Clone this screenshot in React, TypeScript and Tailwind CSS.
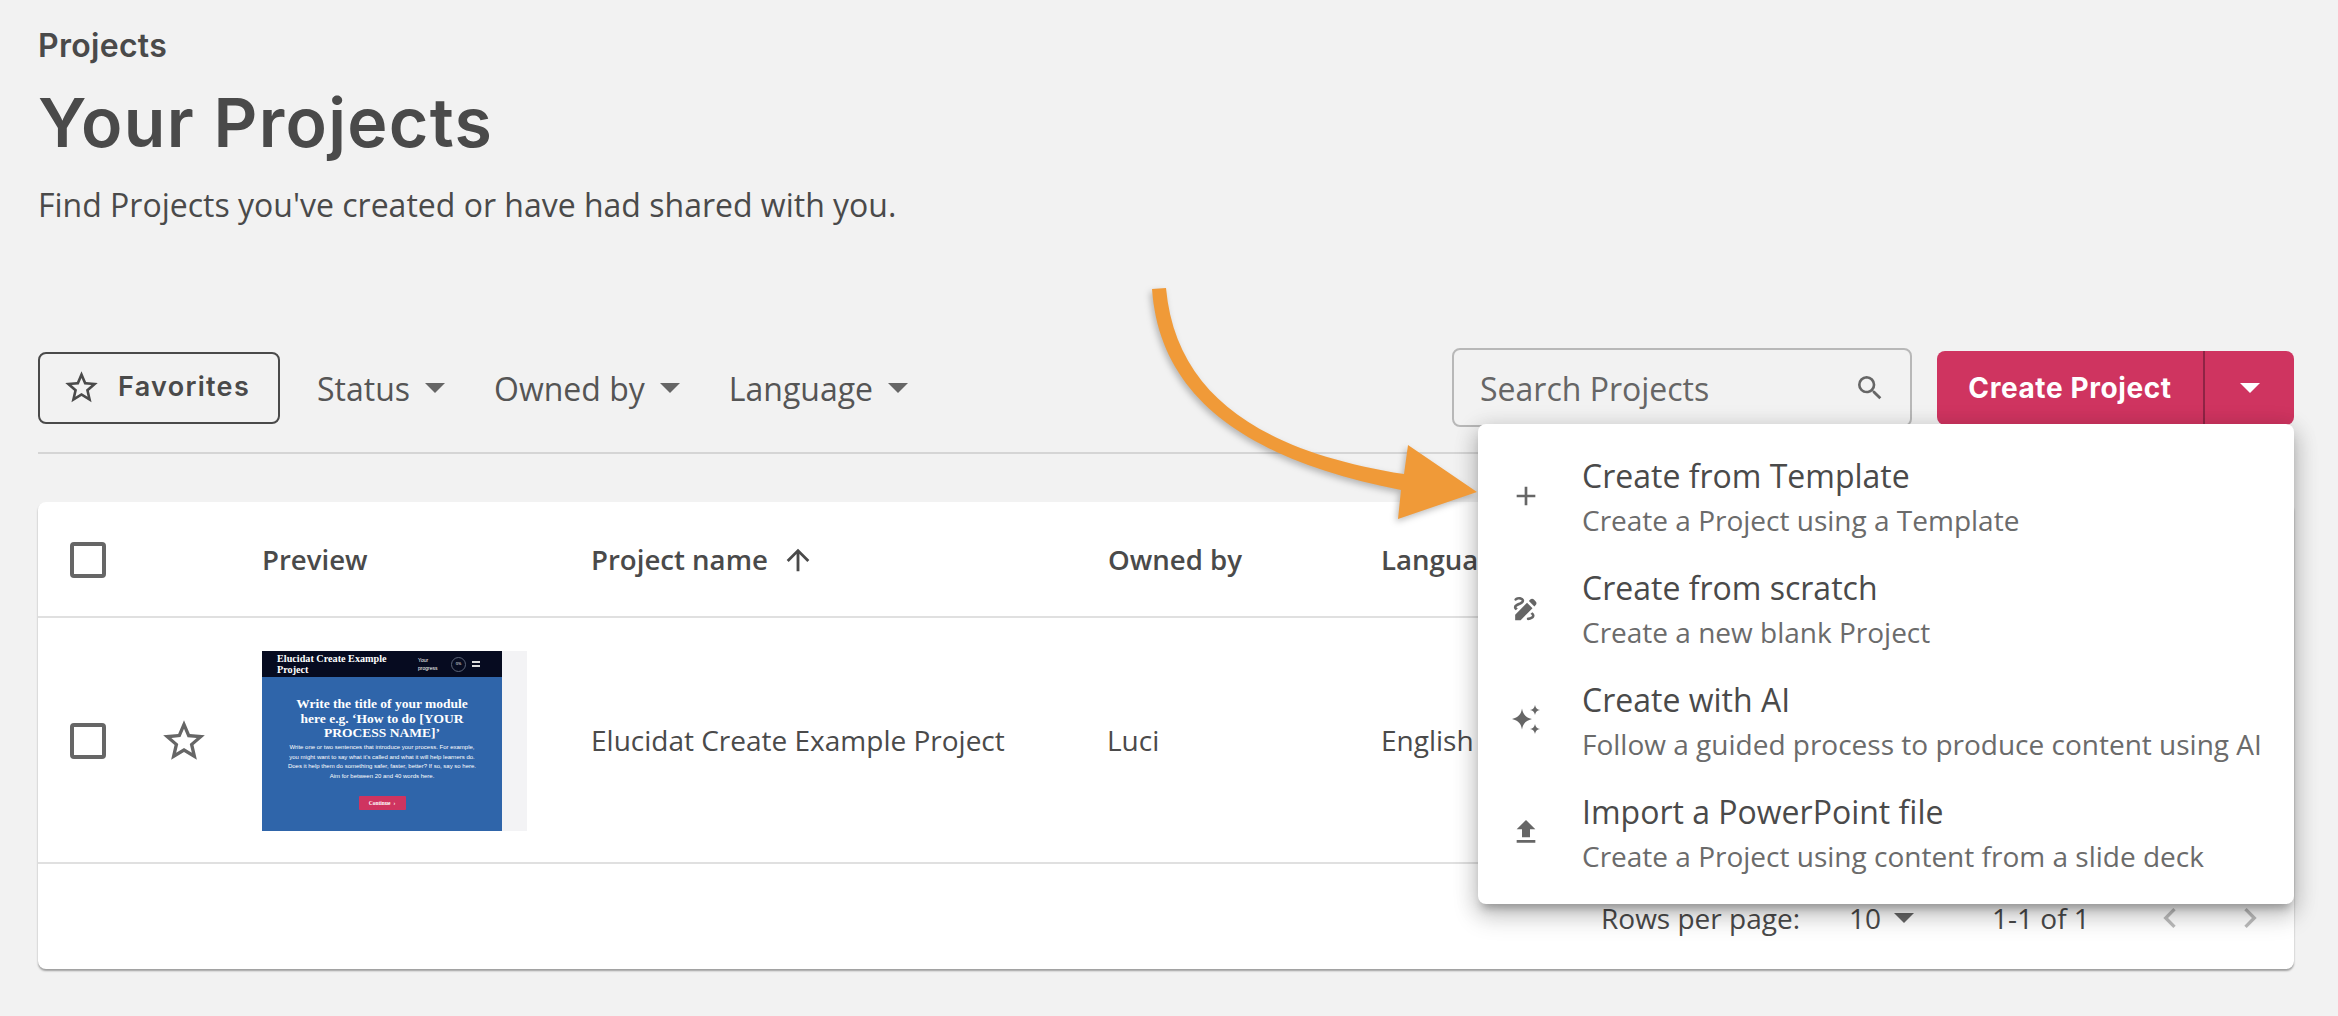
import React from "react";
import { MdStarBorder, MdAdd, MdDraw, MdFileUpload, MdSearch, MdArrowUpward, MdChevronLeft, MdChevronRight } from "react-icons/md";

const Caret = ({ className = "" }: { className?: string }) => (
  <svg viewBox="0 0 20 10" className={"w-[20px] h-[10px] " + className} fill="currentColor">
    <path d="M0 0h20L10 10z" />
  </svg>
);

const Filter = ({ label }: { label: string }) => (
  <div className="flex items-center gap-[15px] text-[32px] leading-[44px] text-[#555]">
    <span className="relative top-[1px]">{label}</span>
    <Caret className="text-[#666]" />
  </div>
);

const Sparkles = () => (
  <svg viewBox="0 0 32 32" className="w-[32px] h-[32px]" fill="#666">
    <path d="M12 4.500c1 6 3.500 8.700 10 10.500-6.500 1.800-9 4.500-10 10.500-1-6-3.500-8.700-10-10.500C8.500 13.200 11 10.500 12 4.500z" />
    <path d="M25 1c.6 3 2 4.400 5 5-3 .6-4.400 2-5 5-.6-3-2-4.400-5-5 3-.6 4.400-2 5-5z" />
    <path d="M25 20c.6 3 2 4.400 5 5-3 .6-4.400 2-5 5-.6-3-2-4.400-5-5 3-.6 4.400-2 5-5z" />
  </svg>
);

const items = [
  { icon: <MdAdd size={32} color="#666" />, title: "Create from Template", sub: "Create a Project using a Template" },
  { icon: <MdDraw size={31} color="#666" />, title: "Create from scratch", sub: "Create a new blank Project" },
  { icon: <Sparkles />, title: "Create with AI", sub: "Follow a guided process to produce content using AI" },
  { icon: <MdFileUpload size={32} color="#666" />, title: "Import a PowerPoint file", sub: "Create a Project using content from a slide deck" },
];

const Checkbox = () => <div className="w-[36px] h-[36px] border-[4px] border-[#666] rounded-[4px]" />;

const Thumb = () => (
  <div className="w-[265px] h-[180px] bg-[#f3f3f5] overflow-hidden">
    <div className="w-[240px] h-[180px] bg-[#2f65aa] text-white overflow-hidden">
      <div className="h-[26px] bg-[#060b20] flex items-center pl-[15px]">
        <div className="w-[141px] pr-[24px] font-['Liberation_Serif',serif] font-bold text-[10.200px] leading-[11px]">Elucidat Create Example Project</div>
        <div className="w-[22px] text-[5px] leading-[8px] font-['Liberation_Sans',sans-serif]">Your progress</div>
        <div className="ml-[11px] w-[15px] h-[15px] rounded-full border border-[#5b6478] flex items-center justify-center text-[4px]">0%</div>
        <div className="ml-[6px] w-[8px] h-[6px] border-y-2 border-[#ddd]" />
      </div>
      <div className="pt-[20px] flex flex-col items-center">
        <div className="font-['Liberation_Serif',serif] font-bold text-[13.500px] leading-[14.500px] text-center w-[190px]">Write the title of your module here e.g. ‘How to do [YOUR PROCESS NAME]’</div>
        <div className="mt-[2.500px] font-['Liberation_Sans',sans-serif] text-[6px] leading-[9.700px] text-center w-[194px]">Write one or two sentences that introduce your process. For example, you might want to say what it's called and what it will help learners do. Does it help them do something safer, faster, better? If so, say so here. Aim for between 20 and 40 words here.</div>
        <div className="mt-[14px] w-[47px] h-[14px] rounded-[1px] bg-[#cf3460] flex items-center justify-center gap-[3px] text-[5.500px] font-bold font-['Liberation_Serif',serif]">Continue <span>›</span></div>
      </div>
    </div>
  </div>
);

export default function App() {
  return (
    <div className="relative w-[2338px] h-[1016px] overflow-hidden bg-[#f2f2f2] pl-[38px] pr-[44px] pt-[24px] font-['Open_Sans',sans-serif] text-[#4a4a4a]">
      <div className="h-[44px] leading-[44px] text-[32px] font-semibold font-['Inter',sans-serif] tracking-[0.3px]">Projects</div>
      <h1 className="mt-[14px] h-[80px] leading-[80px] text-[68px] font-semibold font-['Inter',sans-serif] tracking-[1.300px]">Your Projects</h1>
      <p className="mt-[21px] h-[44px] leading-[44px] text-[32px]">Find Projects you've created or have had shared with you.</p>

      <div className="mt-[121px] h-[79px] flex items-center">
        <div className="w-[242px] h-[72px] border-2 border-[#4a4a4a] rounded-[8px] flex items-center pl-[22px] gap-[17px]">
          <MdStarBorder size={39} color="#4a4a4a" />
          <span className="font-['Inter',sans-serif] font-semibold text-[27px] tracking-[1.300px]">Favorites</span>
        </div>
        <div className="ml-[37px] flex items-center gap-[49px]">
          <Filter label="Status" />
          <Filter label="Owned by" />
          <Filter label="Language" />
        </div>
        <div className="ml-auto w-[460px] h-[79px] border-2 border-[#b8b8b8] rounded-[8px] flex items-center justify-between pl-[26px] pr-[24px] text-[32px] text-[#666]">
          <span className="relative top-[1px]">Search Projects</span>
          <MdSearch size={32} color="#666" />
        </div>
        <div className="ml-[25px] w-[357px] h-[74px] rounded-[8px] bg-[#cf3460] text-white flex items-center">
          <div className="w-[268px] h-full flex items-center justify-center font-['Inter',sans-serif] font-bold text-[28px] tracking-[0.600px] border-r-2 border-[#8f2445]">Create Project</div>
          <div className="flex-1 flex items-center justify-center"><Caret /></div>
        </div>
      </div>

      <div className="mt-[25px] h-[2px] bg-[#d5d5d5]" />

      <div className="mt-[48px] h-[467px] bg-white rounded-[8px] shadow-[0_2px_2px_rgba(0,0,0,0.35)] overflow-hidden">
        <div className="h-[116px] pt-[2px] border-b-2 border-[#e0e0e0] flex items-center text-[27.600px] font-semibold">
          <div className="ml-[32px] w-[192px]"><Checkbox /></div>
          <div className="w-[329px]">Preview</div>
          <div className="w-[517px] flex items-center gap-[13px]">Project name <MdArrowUpward size={34} color="#4a4a4a" /></div>
          <div className="w-[273px]">Owned by</div>
          <div>Language</div>
        </div>
        <div className="h-[246px] pt-[2px] border-b-2 border-[#e0e0e0] flex items-center text-[28px]">
          <div className="ml-[32px] w-[192px] flex items-center">
            <Checkbox />
            <div className="ml-[53px]"><MdStarBorder size={50} color="#666" /></div>
          </div>
          <div className="w-[329px]"><Thumb /></div>
          <div className="w-[516px]"><span className="relative top-[-1px]">Elucidat Create Example Project</span></div>
          <div className="w-[274px]"><span className="relative top-[-1px]">Luci</span></div>
          <div><span className="relative top-[-1px]">English</span></div>
        </div>
        <div className="h-[105px] flex items-start pt-[34px] text-[28px] leading-[40px]">
          <div className="ml-[1563px] w-[248px]">Rows per page:</div>
          <div className="w-[143px] flex items-center gap-[13px]">10 <Caret className="text-[#666]" /></div>
          <div className="w-[158px]">1-1 of 1</div>
          <MdChevronLeft size={40} color="#bdbdbd" />
          <div className="ml-[40px]"><MdChevronRight size={40} color="#bdbdbd" /></div>
        </div>
      </div>

      <div className="absolute left-[1478px] top-[424px] w-[816px] h-[480px] bg-white rounded-[8px] shadow-[0_8px_8px_-4px_rgba(0,0,0,0.25),0_12px_24px_2px_rgba(0,0,0,0.16),0_4px_22px_3px_rgba(0,0,0,0.12)] py-[16px] flex flex-col">
        {items.map((it) => (
          <div key={it.title} className="h-[112px] flex items-center">
            <div className="w-[104px] pl-[32px] flex items-center">{it.icon}</div>
            <div className="pt-[2px]">
              <div className="text-[32px] leading-[44px]">{it.title}</div>
              <div className="mt-[2px] text-[28px] leading-[40px] text-[#6b6b6b]">{it.sub}</div>
            </div>
          </div>
        ))}
      </div>

      <svg className="absolute left-0 top-0 w-[2338px] h-[1016px] pointer-events-none" viewBox="0 0 2338 1016">
        <path
          d="M1152 289C1160 400 1250 460 1401 490L1398 519L1477 492L1408 445L1404 474C1265 452 1176 398 1166 288Z"
          fill="#f09a38"
          style={{ filter: "drop-shadow(-2px 3px 3px rgba(0,0,0,0.25))" }}
        />
      </svg>
    </div>
  );
}
